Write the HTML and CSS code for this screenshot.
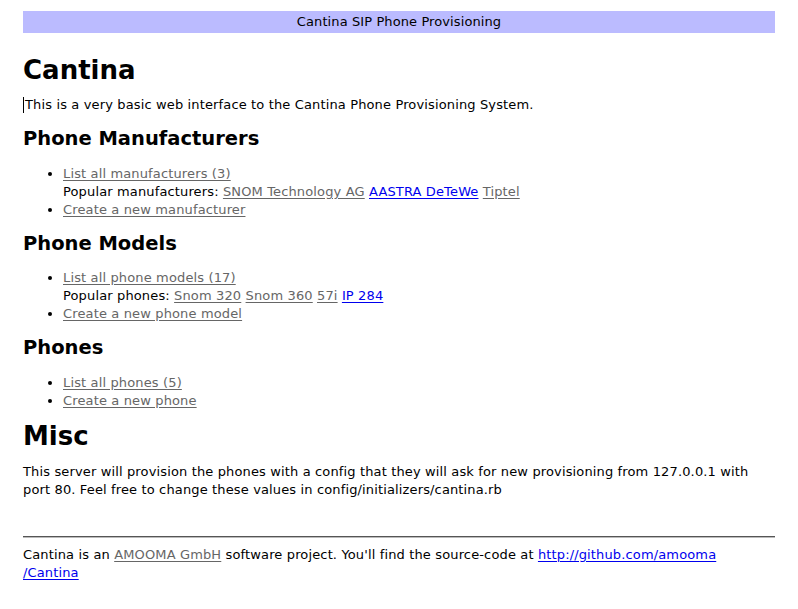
FILE: index.html
```html
<!DOCTYPE html>
<html lang="en">
<head>
<meta charset="utf-8">
<title>Cantina</title>
<link rel="stylesheet" href="styles.css">
</head>
<body>
<div class="page">
  <div class="banner">Cantina SIP Phone Provisioning</div>

  <h1>Cantina</h1>
  <p><span class="caret"></span>This is a very basic web interface to the Cantina Phone Provisioning System.</p>

  <h2>Phone Manufacturers</h2>
  <ul>
    <li><a class="visited" href="#">List all manufacturers (3)</a><br>
      Popular manufacturers: <a class="visited" href="#">SNOM Technology AG</a> <a href="#">AASTRA DeTeWe</a> <a class="visited" href="#">Tiptel</a></li>
    <li><a class="visited" href="#">Create a new manufacturer</a></li>
  </ul>

  <h2>Phone Models</h2>
  <ul>
    <li><a class="visited" href="#">List all phone models (17)</a><br>
      Popular phones: <a class="visited" href="#">Snom 320</a> <a class="visited" href="#">Snom 360</a> <a class="visited" href="#">57i</a> <a href="#">IP 284</a></li>
    <li><a class="visited" href="#">Create a new phone model</a></li>
  </ul>

  <h2>Phones</h2>
  <ul>
    <li><a class="visited" href="#">List all phones (5)</a></li>
    <li><a class="visited" href="#">Create a new phone</a></li>
  </ul>

  <h1 class="misc">Misc</h1>
  <p>This server will provision the phones with a config that they will ask for new provisioning from 127.0.0.1 with port 80. Feel free to change these values in config/initializers/cantina.rb</p>

  <hr class="rule">
  <p class="footer">Cantina is an <a class="visited" href="#">AMOOMA GmbH</a> software project. You'll find the source-code at <a href="#">http://github.com/amooma<br>/Cantina</a></p>
</div>
</body>
</html>
```

FILE: styles.css
```css
html, body {
  margin: 0;
  padding: 0;
  background: #fff;
}

body {
  font-family: "DejaVu Sans", Verdana, sans-serif;
  font-size: 13px;
  line-height: 18px;
  letter-spacing: 0.14px;
  color: #000;
}

.page {
  padding: 11px 23px 20px 23px;
}

.banner {
  background: #bbbbff;
  height: 22px;
  line-height: 22px;
  text-align: center;
  margin-bottom: 28px;
  letter-spacing: 0.1px;
}

h1 {
  font-size: 26px;
  line-height: 18px;
  font-weight: bold;
  letter-spacing: 0;
  margin: 17px 0;
}

h1.misc {
  margin-bottom: 18px;
}

h2 {
  font-size: 19.5px;
  line-height: 18px;
  font-weight: bold;
  letter-spacing: 0;
  margin: 16.3px 0;
}

p {
  margin: 13px 0;
}

ul {
  margin: 13px 0;
  padding-left: 40px;
}

a {
  color: #0000ee;
  text-decoration: underline;
  text-underline-offset: 2px;
}

a.visited {
  color: #666666;
}

.caret {
  display: inline-block;
  width: 1px;
  height: 16px;
  background: #000;
  vertical-align: -4px;
  margin-right: 1px;
}

.rule {
  border: 0;
  border-top: 1px solid #555;
  border-bottom: 1px solid #bbb;
  height: 0;
  margin: 37px 0 8px 0;
}

.footer {
  margin-top: 8px;
}
```
